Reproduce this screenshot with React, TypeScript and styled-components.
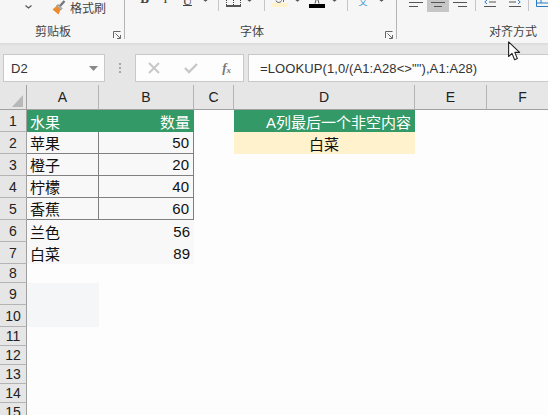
import styled, { createGlobalStyle } from "styled-components";

const GlobalStyle = createGlobalStyle`
  html, body { margin: 0; padding: 0; background: #fdfdfd; }
  body { font-family: "Liberation Sans", "Noto Sans CJK SC", sans-serif; }
`;

const columns = [
  { name: "A", width: 72 },
  { name: "B", width: 95 },
  { name: "C", width: 40 },
  { name: "D", width: 181 },
  { name: "E", width: 72 },
  { name: "F", width: 72 },
];

const rowHeights = [22, 22, 22, 22, 22, 22, 22, 19, 22, 22, 19, 19, 19, 19, 19];

const fruits: Record<number, [string, number]> = {
  2: ["苹果", 50],
  3: ["橙子", 20],
  4: ["柠檬", 40],
  5: ["香蕉", 60],
  6: ["兰色", 56],
  7: ["白菜", 89],
};

function Chevron() {
  return (
    <svg width="7" height="4" viewBox="0 0 7 4">
      <path d="M0.5 0.5 L3.5 3 L6.5 0.5" fill="none" stroke="#555" strokeWidth="1.2" />
    </svg>
  );
}

function Launcher() {
  return (
    <svg width="8" height="8" viewBox="0 0 8 8">
      <path d="M0.5 7V0.5H7.5M7.5 7.5H4M7.5 7.5V4M2.5 2.5L7 7" fill="none" stroke="#666" strokeWidth="1" />
    </svg>
  );
}

function Brush() {
  return (
    <svg width="14" height="15" viewBox="0 0 14 15">
      <path d="M8 6L12.5 1" stroke="#777" strokeWidth="2.4" fill="none" />
      <path d="M6 4.5L10 8.5L8.5 10L4.5 6Z" fill="#b9b9b9" stroke="#666" strokeWidth="0.7" />
      <path d="M4.5 6L8.5 10L6.5 14.5L0.5 9.5Z" fill="#ed8a2c" />
    </svg>
  );
}

function AlignLines({ kind }: { kind: "left" | "center" | "right" }) {
  const short = kind === "left" ? "M0 6.5H9" : kind === "center" ? "M3 6.5H11" : "M5 6.5H14";
  return (
    <svg width="14" height="8" viewBox="0 0 14 8">
      <path d={`M0 2.5H14 ${short}`} stroke="#555" strokeWidth="1" fill="none" />
    </svg>
  );
}

function Indent({ flip }: { flip?: boolean }) {
  return (
    <svg width="13" height="8" viewBox="0 0 13 8" style={flip ? { transform: "scaleX(-1)" } : undefined}>
      <path d="M3 0L0.8 2L3 4" stroke="#2b79c2" strokeWidth="1" fill="none" />
      <path d="M5 2H12M0 6.5H12" stroke="#555" strokeWidth="1" fill="none" />
    </svg>
  );
}

export default function App() {
  return (
    <Page>
      <GlobalStyle />
      <Ribbon>
        <Group $width={125}>
          <ToolRow $left={14}>
            <Tool $w={28} $lift={8}>
              <Chevron />
            </Tool>
            <Tool $w={14} $lift={2} $gap={10}>
              <Brush />
            </Tool>
            <PasteLabel>格式刷</PasteLabel>
          </ToolRow>
          <GroupFoot $left={35}>
            <GroupTitle>剪贴板</GroupTitle>
            <LauncherSlot>
              <Launcher />
            </LauncherSlot>
          </GroupFoot>
        </Group>
        <Group $width={272}>
          <ToolRow $left={9}>
            <Tool $w={21} $lift={12}>
              <StyleLetter $bold>B</StyleLetter>
            </Tool>
            <Tool $w={21} $lift={12}>
              <StyleLetter>I</StyleLetter>
            </Tool>
            <Tool $w={23} $lift={11}>
              <Underlined>U</Underlined>
            </Tool>
            <Tool $w={13} $lift={15}>
              <Chevron />
            </Tool>
            <Divider />
            <Tool $w={16} $lift={10}>
              <svg width="15" height="7" viewBox="0 0 15 7">
                <path d="M0.5 0V5.5M7.5 0V5M14.5 0V5.5" stroke="#444" strokeDasharray="1 1" fill="none" />
                <path d="M0 6H15" stroke="#111" strokeWidth="1.4" />
              </svg>
            </Tool>
            <Tool $w={17} $lift={15}>
              <Chevron />
            </Tool>
            <Divider />
            <Tool $w={17} $lift={10}>
              <svg width="17" height="7" viewBox="0 0 17 7">
                <path d="M5 0.5C5.5 3 10 3 10.5 0.5" stroke="#555" fill="none" />
                <path d="M12.5 0V2" stroke="#2b79c2" fill="none" />
                <rect y="3" width="17" height="4" fill="#fff2cc" />
              </svg>
            </Tool>
            <Tool $w={18} $lift={15}>
              <Chevron />
            </Tool>
            <Tool $w={22} $lift={9}>
              <svg width="16" height="8" viewBox="0 0 16 8">
                <path d="M6 3.5L7 0M10 3.5L9 0" stroke="#555" fill="none" />
                <rect y="4" width="16" height="4" fill="#000000" />
              </svg>
            </Tool>
            <Tool $w={13} $lift={15}>
              <Chevron />
            </Tool>
            <Divider />
            <Tool $w={18} $lift={10}>
              <PhoneticGlyph>文</PhoneticGlyph>
            </Tool>
            <Tool $w={18} $lift={15}>
              <Chevron />
            </Tool>
          </ToolRow>
          <GroupFoot $left={115}>
            <GroupTitle>字体</GroupTitle>
            <LauncherSlot>
              <Launcher />
            </LauncherSlot>
          </GroupFoot>
        </Group>
        <LastGroup>
          <ToolRow $left={10}>
            <Tool $w={18} $lift={9}>
              <AlignLines kind="left" />
            </Tool>
            <ActiveTool>
              <AlignLines kind="center" />
            </ActiveTool>
            <Tool $w={18} $lift={9}>
              <AlignLines kind="right" />
            </Tool>
            <Divider />
            <Tool $w={17} $lift={9}>
              <Indent />
            </Tool>
            <Tool $w={15} $lift={9} $gap={8}>
              <Indent flip />
            </Tool>
            <Divider />
            <Tool $w={14} $lift={10}>
              <svg width="12" height="7" viewBox="0 0 12 7">
                <path d="M0.5 0V6.5H12M0.5 3H12M5 0V3" stroke="#2b79c2" fill="none" />
              </svg>
            </Tool>
          </ToolRow>
          <GroupFoot $left={92}>
            <GroupTitle>对齐方式</GroupTitle>
          </GroupFoot>
        </LastGroup>
      </Ribbon>

      <FormulaBar>
        <NameBox>
          D2
          <svg width="9" height="5" viewBox="0 0 9 5">
            <path d="M0 0H9L4.5 5Z" fill="#888" />
          </svg>
        </NameBox>
        <Grip>
          <GripDot />
          <GripDot />
          <GripDot />
        </Grip>
        <ButtonBox>
          <svg width="12" height="12" viewBox="0 0 12 12">
            <path d="M1 1L11 11M11 1L1 11" stroke="#c8c8c8" strokeWidth="2" />
          </svg>
          <svg width="14" height="12" viewBox="0 0 14 12">
            <path d="M1 6L5 10L13 2" stroke="#c8c8c8" strokeWidth="2.4" fill="none" />
          </svg>
          <FxLabel>
            f<sub>x</sub>
          </FxLabel>
        </ButtonBox>
        <FormulaInput>=LOOKUP(1,0/(A1:A28&lt;&gt;""),A1:A28)</FormulaInput>
      </FormulaBar>

      <Sheet>
        <Corner>
          <svg width="11" height="12" viewBox="0 0 11 12">
            <path d="M11 0V12H0Z" fill="#b8b8b8" />
          </svg>
        </Corner>
        {columns.map((c) => (
          <ColHead key={c.name}>{c.name}</ColHead>
        ))}
        {rowHeights.map((_, i) => {
          const row = i + 1;
          const fruit = fruits[row];
          const boxed = row >= 2 && row <= 5;
          return [
            <RowHead key={`h${row}`}>{row}</RowHead>,
            ...columns.map((c) => {
              const key = `${c.name}${row}`;
              if (row === 1 && c.name === "A") return <Cell key={key} $fill="#339966" $color="#fff">水果</Cell>;
              if (row === 1 && c.name === "B") return <Cell key={key} $fill="#339966" $color="#fff" $align="right">数量</Cell>;
              if (row === 1 && c.name === "D") return <Cell key={key} $fill="#339966" $color="#fff" $align="right">A列最后一个非空内容</Cell>;
              if (row === 2 && c.name === "D") return <Cell key={key} $fill="#fff2cc" $align="center">白菜</Cell>;
              if (fruit && c.name === "A") return <Cell key={key} $fill="#f8f8f8" $boxed={boxed}>{fruit[0]}</Cell>;
              if (fruit && c.name === "B") return <Cell key={key} $fill="#f8f8f8" $boxed={boxed} $align="right">{fruit[1]}</Cell>;
              if ((row === 9 || row === 10) && c.name === "A") return <Cell key={key} $fill="#f5f6f7" />;
              return <Cell key={key} />;
            }),
          ];
        })}
      </Sheet>

      <Pointer width="13" height="20" viewBox="0 0 13 20">
        <path
          d="M0.6 0.8V15.5L4 12.4L6.6 18.8L9.4 17.6L6.8 11.4H11.6Z"
          fill="#fff"
          stroke="#222"
          strokeWidth="1.1"
          strokeLinejoin="round"
        />
      </Pointer>
    </Page>
  );
}

const Page = styled.div`
  position: relative;
  width: 548px;
  height: 415px;
  overflow: hidden;
  background: #fdfdfd;
`;

const Ribbon = styled.div`
  display: flex;
  height: 43px;
  background: #f6f6f6;
  overflow: hidden;
`;
const Group = styled.div<{ $width: number }>`
  flex: none;
  width: ${({ $width }) => $width}px;
  display: flex;
  flex-direction: column;
  border-right: 1px solid #b4b4b4;
  margin-bottom: 4px;
  box-sizing: border-box;
`;
const LastGroup = styled.div`
  flex: 1;
  min-width: 0;
  display: flex;
  flex-direction: column;
`;
const ToolRow = styled.div<{ $left: number }>`
  display: flex;
  align-items: flex-end;
  height: 17px;
  padding-left: ${({ $left }) => $left}px;
  overflow: hidden;
  white-space: nowrap;
`;
const Tool = styled.div<{ $w: number; $lift: number; $gap?: number }>`
  flex: none;
  width: ${({ $w }) => $w}px;
  display: flex;
  justify-content: center;
  align-items: flex-end;
  margin-left: ${({ $gap }) => $gap ?? 0}px;
  margin-bottom: ${({ $lift }) => $lift}px;
  line-height: 0;
`;
const ActiveTool = styled.div`
  flex: none;
  width: 22px;
  height: 12px;
  margin: 0 2px 5px;
  background: #c6c6c6;
  display: flex;
  justify-content: center;
  align-items: flex-end;
  padding-bottom: 4px;
  box-sizing: border-box;
`;
const Divider = styled.div`
  flex: none;
  align-self: flex-start;
  width: 1px;
  height: 11px;
  margin: 0 6px;
  background: #c6c6c6;
`;
const PasteLabel = styled.span`
  font-size: 12px;
  line-height: 16px;
  color: #444;
  margin-left: 4px;
`;
const StyleLetter = styled.span<{ $bold?: boolean }>`
  font-family: "Liberation Serif", serif;
  font-size: 13px;
  line-height: 13px;
  color: #444;
  font-weight: ${({ $bold }) => ($bold ? 700 : 400)};
`;
const Underlined = styled(StyleLetter)`
  border-bottom: 1px solid #444;
  line-height: 9px;
`;
const PhoneticGlyph = styled.span`
  font-size: 9px;
  line-height: 10px;
  color: #3c97d3;
`;
const GroupFoot = styled.div<{ $left: number }>`
  position: relative;
  flex: 1;
  padding: 9px 0 0 ${({ $left }) => $left}px;
  display: flex;
  align-items: flex-start;
`;
const GroupTitle = styled.span`
  font-size: 12px;
  line-height: 13px;
  color: #444;
  white-space: nowrap;
`;
const LauncherSlot = styled.span`
  position: absolute;
  right: 3px;
  bottom: 0;
  line-height: 0;
`;

const FormulaBar = styled.div`
  display: flex;
  align-items: stretch;
  height: 28px;
  padding: 11px 0 3px 3px;
  background: linear-gradient(#dadada 0, #e6e6e6 3px);
`;
const BarBox = styled.div`
  display: flex;
  align-items: center;
  background: #fdfdfd;
  border: 1px solid #c8c8c8;
  box-sizing: border-box;
`;
const NameBox = styled(BarBox)`
  width: 102px;
  justify-content: space-between;
  padding: 0 6px 0 7px;
  font-size: 13px;
  color: #333;
`;
const Grip = styled.div`
  width: 30px;
  display: flex;
  flex-direction: column;
  align-items: center;
  justify-content: center;
  gap: 2px;
`;
const GripDot = styled.span`
  width: 2px;
  height: 2px;
  background: #a8a8a8;
`;
const ButtonBox = styled(BarBox)`
  width: 109px;
  justify-content: space-between;
  padding: 0 12px;
`;
const FxLabel = styled.span`
  font-family: "Liberation Serif", serif;
  font-style: italic;
  font-size: 13px;
  font-weight: 700;
  color: #777;
  sub {
    font-size: 9px;
    vertical-align: -1px;
  }
`;
const FormulaInput = styled(BarBox)`
  flex: 1;
  margin-left: 4px;
  padding-left: 11px;
  border-right: 0;
  font-size: 13px;
  letter-spacing: 0.1px;
  color: #333;
  white-space: nowrap;
`;

const Sheet = styled.div`
  display: grid;
  grid-template-columns: 27px ${columns.map((c) => `${c.width}px`).join(" ")};
  grid-template-rows: 25px ${rowHeights.map((h) => `${h}px`).join(" ")};
`;
const HeadCell = styled.div`
  display: flex;
  align-items: center;
  justify-content: center;
  background: #e6e6e6;
  color: #222;
  font-size: 14px;
  box-sizing: border-box;
`;
const Corner = styled(HeadCell)`
  align-items: flex-end;
  justify-content: flex-end;
  padding: 0 3px 2px 0;
  border-right: 1px solid #a0a0a0;
  border-bottom: 1px solid #a0a0a0;
`;
const ColHead = styled(HeadCell)`
  border-right: 1px solid #b4b4b4;
  border-bottom: 1px solid #a0a0a0;
`;
const RowHead = styled(HeadCell)`
  border-right: 1px solid #a0a0a0;
  border-bottom: 1px solid #b4b4b4;
`;
const Cell = styled.div<{
  $fill?: string;
  $color?: string;
  $align?: "left" | "center" | "right";
  $boxed?: boolean;
}>`
  display: flex;
  align-items: center;
  justify-content: ${({ $align }) =>
    $align === "right" ? "flex-end" : $align === "center" ? "center" : "flex-start"};
  padding: 0 4px 0 3px;
  box-sizing: border-box;
  font-size: 15px;
  color: ${({ $color }) => $color ?? "#111"};
  background: ${({ $fill }) => $fill ?? "transparent"};
  white-space: nowrap;
  ${({ $boxed }) => ($boxed ? "border-right: 1px solid #808080; border-bottom: 1px solid #808080;" : "")}
`;

const Pointer = styled.svg`
  position: absolute;
  left: 508px;
  top: 41px;
`;
